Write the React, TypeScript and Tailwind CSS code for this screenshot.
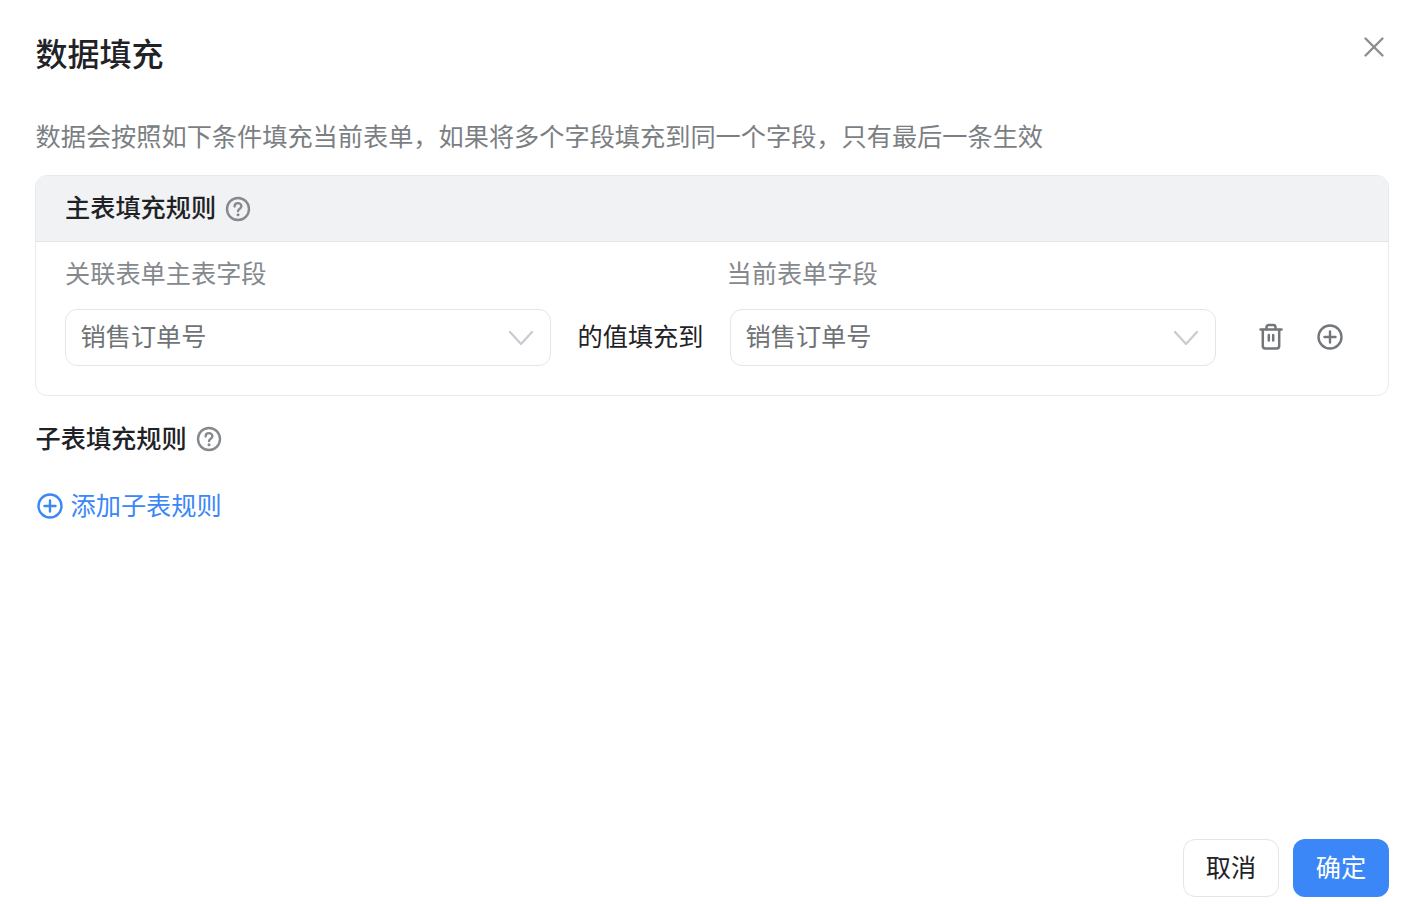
import { X } from "lucide-react";

const cjk = "font-['Inter','Noto_Sans_CJK_SC',sans-serif]";

function HelpIcon() {
    return (
        <svg width="26" height="26" viewBox="0 0 26 26" fill="none" className="shrink-0">
            <circle cx="13" cy="13" r="11" stroke="#85898d" strokeWidth="2.400" />
            <path d="M9.600 10.500c0-2 1.500-3.300 3.400-3.300s3.400 1.300 3.400 3c0 2.500-3.400 2.500-3.400 5" stroke="#85898d" strokeWidth="2.300" strokeLinecap="round" />
            <circle cx="13" cy="18.800" r="1.500" fill="#85898d" />
        </svg>
    );
}

function PlusCircle({ size, color }: { size: number; color: string }) {
    return (
        <svg width={size} height={size} viewBox="0 0 26 26" fill="none" stroke={color} strokeWidth="2.400" strokeLinecap="round" className="shrink-0">
            <circle cx="13" cy="13" r="11.500" />
            <path d="M13 7.500v11M7.500 13h11" />
        </svg>
    );
}

function TrashIcon() {
    return (
        <svg width="24" height="28" viewBox="0 0 24 28" fill="none" stroke="#73777b" strokeWidth="2.500" strokeLinecap="round" strokeLinejoin="round">
            <path d="M1.500 6.500h21" />
            <path d="M7.500 6V4.200c0-1.200 1-2.200 2.200-2.200h4.600c1.200 0 2.200 1 2.200 2.200V6" />
            <path d="M3.800 7v16c0 1.400 1 2.400 2.400 2.400h11.600c1.400 0 2.400-1 2.400-2.400V7" />
            <path d="M9.800 12v5.500M14.200 12v5.500" />
        </svg>
    );
}

function Chevron() {
    return (
        <svg width="26" height="16" viewBox="0 0 26 16" fill="none" stroke="#c9ccd0" strokeWidth="2.300" strokeLinecap="round" strokeLinejoin="round">
            <path d="M2 2l11 12L24 2" />
        </svg>
    );
}

function FakeSelect({ value }: { value: string }) {
    return (
        <div className="flex h-[57px] w-[486px] shrink-0 items-center justify-between rounded-[12px] border border-[#e3e5e8] bg-white pl-[14.500px] pr-[16px]">
            <span className="text-[25.200px] text-[#6f7376]">{value}</span>
            <Chevron />
        </div>
    );
}

export default function App() {
    return (
        <div className={`flex h-[904px] flex-col bg-white pl-[35px] pr-[27px] ${cjk}`}>
            <div className="flex items-start justify-between">
                <h1 className="pl-[0.500px] pt-[33px] text-[32px] leading-[44px] font-medium text-[#1f2226]">数据填充</h1>
                <X className="mt-[30px] mr-[-2px] h-[34px] w-[34px] text-[#8a8f94]" strokeWidth={1.700} />
            </div>

            <p className="mt-[42px] pl-[0.500px] text-[25.200px] leading-[36px] text-[#7b7f83]">
                数据会按照如下条件填充当前表单，如果将多个字段填充到同一个字段，只有最后一条生效
            </p>

            <div className="mt-[20px] h-[221px] overflow-hidden rounded-[12px] border border-[#e8eaec]">
                <div className="flex h-[66px] items-center gap-[9px] border-b border-[#e3e5e8] bg-[#f1f2f4] pl-[29px]">
                    <span className="text-[25.200px] font-medium text-[#1f2226]">主表填充规则</span>
                    <HelpIcon />
                </div>
                <div className="flex pt-[14px] pl-[29px] text-[25.200px] leading-[36px] text-[#85898d]">
                    <span className="w-[661.500px]">关联表单主表字段</span>
                    <span>当前表单字段</span>
                </div>
                <div className="mt-[17px] flex items-center pl-[29px]">
                    <FakeSelect value="销售订单号" />
                    <span className="w-[179px] text-center text-[25.200px] text-[#1f2226]">的值填充到</span>
                    <FakeSelect value="销售订单号" />
                    <div className="mt-[-1px] ml-[43px] flex items-center gap-[34px]">
                        <TrashIcon />
                        <PlusCircle size={26} color="#73777b" />
                    </div>
                </div>
            </div>

            <div className="mt-[25px] flex items-center gap-[9px] pl-[0.500px]">
                <span className="text-[25.200px] leading-[36px] font-medium text-[#1f2226]">子表填充规则</span>
                <HelpIcon />
            </div>

            <div className="mt-[31px] flex items-center gap-[8px] pl-[1.500px] text-[#3b87f7]">
                <PlusCircle size={26} color="#3b87f7" />
                <span className="text-[25.200px] leading-[36px]">添加子表规则</span>
            </div>

            <div className="mt-auto flex justify-end gap-[14px] pb-[7px]">
                <button className="h-[58px] w-[96px] rounded-[12px] border border-[#e3e5e8] bg-white pt-[2px] text-[25.200px] text-[#1f2226]">取消</button>
                <button className="h-[58px] w-[96px] rounded-[12px] bg-[#3b87f7] pt-[2px] text-[25.200px] text-white">确定</button>
            </div>
        </div>
    );
}
